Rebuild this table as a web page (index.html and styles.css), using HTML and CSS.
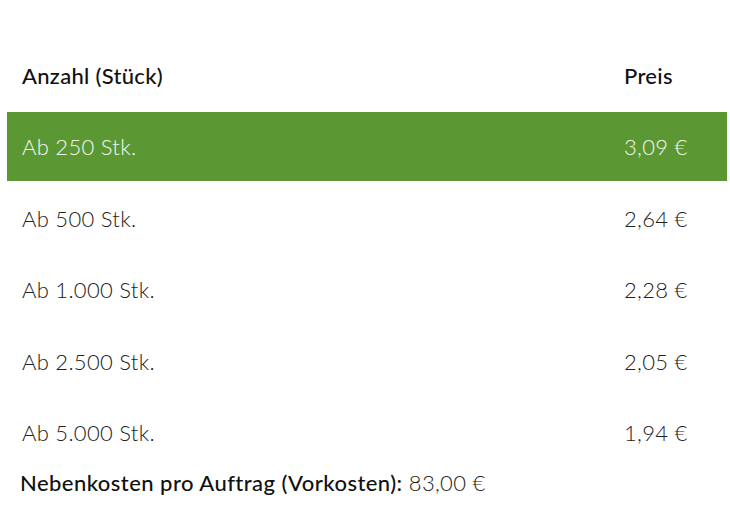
FILE: index.html
```html
<!DOCTYPE html>
<html lang="de">
<head>
<meta charset="utf-8">
<link rel="stylesheet" href="styles.css">
</head>
<body>
<div class="table">
  <div class="row head">
    <div class="qty">Anzahl (Stück)</div>
    <div class="price">Preis</div>
  </div>
  <div class="rows">
    <div class="row item active">
      <div class="qty">Ab 250 Stk.</div>
      <div class="price">3,09 €</div>
    </div>
    <div class="row item">
      <div class="qty">Ab 500 Stk.</div>
      <div class="price">2,64 €</div>
    </div>
    <div class="row item">
      <div class="qty">Ab 1.000 Stk.</div>
      <div class="price">2,28 €</div>
    </div>
    <div class="row item">
      <div class="qty">Ab 2.500 Stk.</div>
      <div class="price">2,05 €</div>
    </div>
    <div class="row item">
      <div class="qty">Ab 5.000 Stk.</div>
      <div class="price">1,94 €</div>
    </div>
  </div>
  <p class="extra"><span class="label">Nebenkosten pro Auftrag (Vorkosten):</span> 83,00 €</p>
</div>
</body>
</html>
```

FILE: styles.css
```css
html, body {
  margin: 0;
  padding: 0;
  background: #ffffff;
}
body {
  font-family: "Lato", "Liberation Sans", sans-serif;
  font-size: 22px;
  font-weight: 300;
  letter-spacing: 0.3px;
  color: #222222;
}
.table {
  width: 720px;
  margin-left: 7px;
  padding-top: 38px;
}
.row {
  display: grid;
  grid-template-columns: 617px 1fr;
  align-items: center;
  height: 69px;
}
.qty {
  padding-left: 15px;
}
.head {
  height: 74px;
  color: #111111;
  font-weight: 500;
}
.rows {
  display: flex;
  flex-direction: column;
  gap: 2.6px;
}
.item.active {
  background: #5b9733;
  color: #f4f7ee;
}
.extra {
  margin: 0;
  padding-left: 13px;
  height: 28px;
  line-height: 28px;
  margin-top: 2px;
}
.label {
  font-weight: 500;
  color: #111111;
  letter-spacing: 0.45px;
}
```
